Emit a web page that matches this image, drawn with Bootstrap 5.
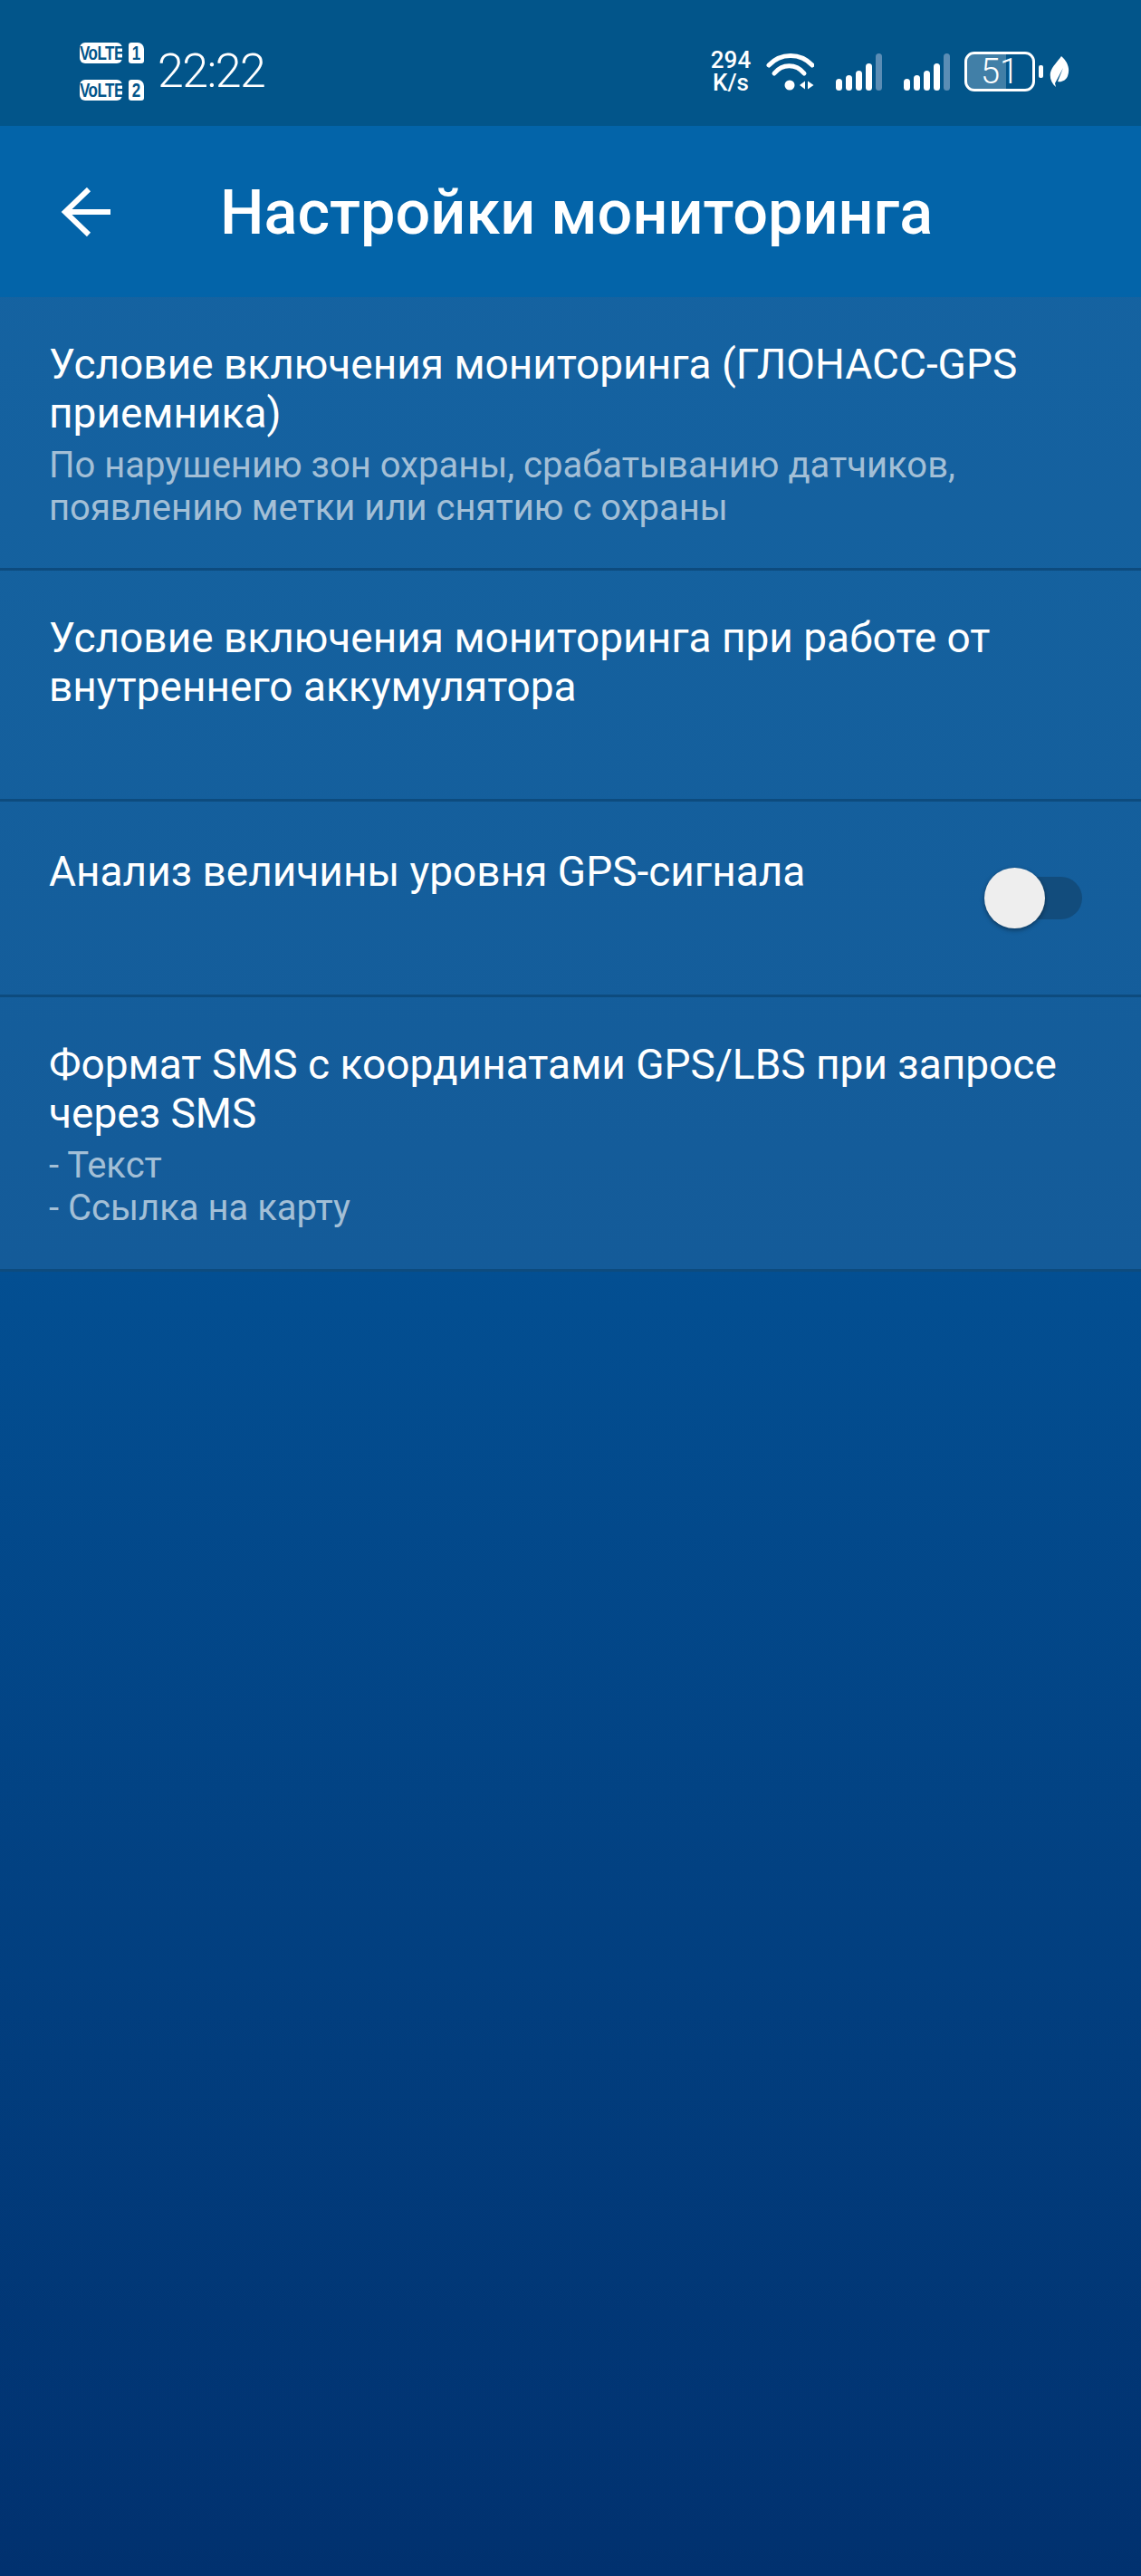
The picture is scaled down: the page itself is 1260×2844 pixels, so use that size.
<!DOCTYPE html>
<html lang="ru">
<head>
<meta charset="UTF-8" />
<title>Настройки мониторинга</title>
<link href="https://cdn.jsdelivr.net/npm/bootstrap@5.3.2/dist/css/bootstrap.min.css" rel="stylesheet">
<style>
html,body{height:100%;}
body{font-family:Roboto,"Liberation Sans",sans-serif;color:#fff;background:linear-gradient(180deg,#045a9c 0,#034f92 1400px,#01316f 2844px);min-height:2844px;}
.status-bar{height:139px;background:#02558a;padding:19px 79px 0 88px;}
.sim-col{width:71px;gap:18px;}
.sim-row{display:flex;justify-content:space-between;height:23px;}
.sim-tag,.sim-num{background:#fff;color:#02558a;text-align:center;font-weight:700;font-family:"Liberation Sans Narrow","Liberation Sans",sans-serif;line-height:23px;}
.sim-tag{border-radius:6px;width:47px;font-size:17px;letter-spacing:-.5px;}
.sim-num{border-radius:3px 7px 3px 3px;width:17px;font-size:17px;}
.sim-tag span,.sim-num span{display:inline-block;transform:scaleY(1.3);}
.clock{font-weight:300;font-size:52px;margin-left:15px;line-height:1;letter-spacing:-1.6px;}
.speed{font-weight:500;font-size:26px;line-height:25px;text-align:center;width:46px;}
.batt-box{width:78px;height:44px;border:3px solid #fff;border-radius:11px;position:relative;overflow:hidden;text-align:center;font-weight:300;font-size:38px;line-height:38px;}
.batt-fill{position:absolute;left:0;top:0;bottom:0;width:60%;background:rgba(255,255,255,.25);}
.batt-num{position:relative;}
.leaf{margin-left:7px;}
.tool-bar{height:189px;background:#0364a9;}
.back-wrap{width:243px;padding-left:67px;}
.page-title{font-weight:500;font-size:68.4px;margin:0;line-height:1;padding-top:4px;}
.set-item{background:rgba(255,255,255,.07);border-bottom:3px solid #0d4b7e;padding:47px 54px 0;}
.set-a{height:302px;}
.set-b{height:255px;}
.set-c{height:216px;padding-top:50px;}
.set-d{height:303px;}
.set-name{font-size:46px;line-height:54px;}
.set-sub{font-size:40px;line-height:47px;color:#a3bfd6;margin-top:7px;}
.sw{width:108px;height:68px;position:relative;margin-top:23px;margin-right:11px;flex:none;}
.sw-track{position:absolute;right:0;top:10px;height:47px;width:100px;background:#124c7c;border-radius:24px;}
.sw-knob{position:absolute;left:0;top:0;width:67px;height:67px;background:#eeeeee;border-radius:50%;box-shadow:0 2px 5px rgba(0,0,0,.4);}
</style>
</head>
<body>
<div class="status-bar d-flex align-items-center">
  <div class="sim-col d-flex flex-column">
    <div class="sim-row"><div class="sim-tag"><span>VoLTE</span></div><div class="sim-num"><span>1</span></div></div>
    <div class="sim-row"><div class="sim-tag"><span>VoLTE</span></div><div class="sim-num"><span>2</span></div></div>
  </div>
  <div class="clock">22:22</div>
  <div class="ms-auto d-flex align-items-center">
    <div class="speed">294<br>K/s</div>
    <svg class="ms-3" width="53" height="41" viewBox="0 0 53 41" fill="none" stroke="#fff" stroke-linecap="round">
      <path d="M3 13C16 -1 38 -1 51 13" stroke-width="5"/>
      <path d="M9 22C18 11 33 11 42 22" stroke-width="5"/>
      <circle cx="26" cy="35" r="5.5" fill="#fff" stroke="none"/>
      <path d="M37 35l6-4.500v9zM46 30.500l6.500 4.500-6.500 4.500z" fill="#fff" stroke="none"/>
    </svg>
    <svg class="ms-4" width="51" height="41" viewBox="0 0 51 41" fill="#fff">
      <rect x="0" y="28" width="7" height="13" rx="3.5"/>
      <rect x="11" y="24" width="7" height="17" rx="3.5"/>
      <rect x="22" y="19" width="7" height="22" rx="3.5"/>
      <rect x="33" y="11" width="7" height="30" rx="3.5"/>
      <rect x="44" y="0" width="7" height="41" rx="3.5" fill="#5b8db5"/>
    </svg>
    <svg class="ms-4" width="51" height="41" viewBox="0 0 51 41" fill="#fff">
      <rect x="0" y="28" width="7" height="13" rx="3.5"/>
      <rect x="11" y="24" width="7" height="17" rx="3.5"/>
      <rect x="22" y="19" width="7" height="22" rx="3.5"/>
      <rect x="33" y="11" width="7" height="30" rx="3.5"/>
      <rect x="44" y="0" width="7" height="41" rx="3.5" fill="#5b8db5"/>
    </svg>
    <div class="batt-box ms-3"><div class="batt-fill"></div><span class="batt-num">51</span></div>
    <svg class="ms-1" width="5" height="14" viewBox="0 0 5 14"><rect width="5" height="14" rx="2" fill="#fff"/></svg>
    <svg class="leaf" width="22" height="34" viewBox="0 0 22 34"><path d="M13 0C20 6 23 14 20 22 18 27 13 29 9 28L15 13 6 30 7 34C2 30 0 24 1 18 3 11 9 6 13 0Z" fill="#fff"/></svg>
  </div>
</div>
<div class="tool-bar d-flex align-items-center">
  <div class="back-wrap">
    <svg class="d-block" width="56" height="54" viewBox="0 0 56 54" fill="none" stroke="#fff" stroke-width="6"><path d="M55 27H5M31 2 5 27l26 25"/></svg>
  </div>
  <h1 class="page-title">Настройки мониторинга</h1>
</div>
<div class="set-item set-a">
  <div class="set-name">Условие включения мониторинга (ГЛОНАСС-GPS приемника)</div>
  <div class="set-sub">По нарушению зон охраны, срабатыванию датчиков, появлению метки или снятию с охраны</div>
</div>
<div class="set-item set-b">
  <div class="set-name">Условие включения мониторинга при работе от внутреннего аккумулятора</div>
</div>
<div class="set-item set-c d-flex justify-content-between align-items-start">
  <div class="set-name">Анализ величины уровня GPS-сигнала</div>
  <div class="sw"><div class="sw-track"></div><div class="sw-knob"></div></div>
</div>
<div class="set-item set-d">
  <div class="set-name">Формат SMS с координатами GPS/LBS при запросе через SMS</div>
  <div class="set-sub">- Текст<br>- Ссылка на карту</div>
</div>
<script src="https://cdn.jsdelivr.net/npm/bootstrap@5.3.2/dist/js/bootstrap.bundle.min.js"></script>
</body>
</html>
